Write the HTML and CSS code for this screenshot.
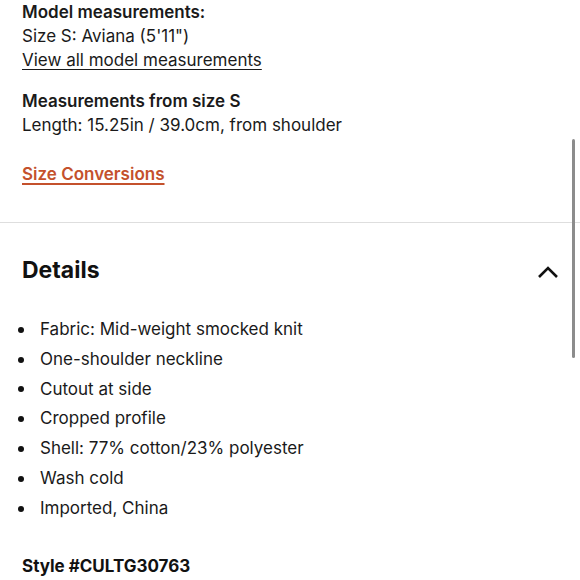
FILE: index.html
```html
<!DOCTYPE html>
<html>
<head>
<meta charset="utf-8">
<link rel="stylesheet" href="styles.css">
</head>
<body>
<div class="page">
  <section class="measure">
    <div class="block">
      <div class="bold">Model measurements:</div>
      <div>Size S: Aviana (5'11")</div>
      <a class="link">View all model measurements</a>
    </div>
    <div class="block block2">
      <div class="bold">Measurements from size S</div>
      <div>Length: 15.25in / 39.0cm, from shoulder</div>
    </div>
    <a class="conv">Size Conversions</a>
  </section>
  <hr class="divider">
  <section class="details">
    <div class="head">
      <h2>Details</h2>
      <svg class="chev" width="22" height="14" viewBox="0 0 22 14"><path d="M2 12 L11 3 L20 12" fill="none" stroke="#111" stroke-width="2.6"/></svg>
    </div>
    <ul class="list">
      <li>Fabric: Mid-weight smocked knit</li>
      <li>One-shoulder neckline</li>
      <li>Cutout at side</li>
      <li>Cropped profile</li>
      <li>Shell: 77% cotton/23% polyester</li>
      <li>Wash cold</li>
      <li>Imported, China</li>
    </ul>
    <div class="style">Style #CULTG30763</div>
  </section>
  <div class="scrollbar"></div>
</div>
</body>
</html>
```

FILE: styles.css
```css
html, body {
  margin: 0;
  padding: 0;
  background: #fff;
}
body {
  font-family: Inter, "Liberation Sans", sans-serif;
  color: #1a1a1a;
  font-size: 17px;
  line-height: 24px;
  width: 580px;
  height: 580px;
  overflow: hidden;
}
.page {
  position: relative;
  height: 580px;
}
.measure {
  padding: 0 22px;
}
.bold {
  font-weight: 600;
}
.link {
  display: block;
  text-decoration: underline;
  text-underline-offset: 3px;
  text-decoration-thickness: 1px;
}
.block2 {
  margin-top: 17px;
}
.conv {
  display: block;
  margin-top: 25px;
  color: #c4512c;
  font-weight: 600;
  text-decoration: underline;
  text-underline-offset: 3px;
  text-decoration-thickness: 1.5px;
}
.divider {
  margin: 36px 0 0;
  border: 0;
  border-top: 1px solid #dedede;
  height: 0;
}
.details {
  padding: 0 22px;
}
.head {
  display: flex;
  justify-content: space-between;
  align-items: center;
  margin-top: 32px;
}
.head h2 {
  margin: 0;
  font-size: 23px;
  font-weight: 700;
  line-height: 30px;
  color: #111;
}
.chev {
  margin-right: -1px;
  margin-top: 4px;
}
.list {
  margin: 30px 0 0;
  padding: 0;
  list-style: none;
}
.list li {
  display: flex;
  align-items: center;
  line-height: 29.8px;
  margin-left: -4px;
}
.list li::before {
  content: "";
  flex: none;
  width: 6px;
  height: 6px;
  border-radius: 50%;
  background: #111;
  margin-right: 16px;
}
.style {
  margin-top: 30px;
  font-weight: 700;
  color: #111;
}
.scrollbar {
  position: absolute;
  left: 572px;
  top: 139px;
  width: 3px;
  height: 219px;
  border-radius: 2px;
  background: #8c8c8c;
}
```
